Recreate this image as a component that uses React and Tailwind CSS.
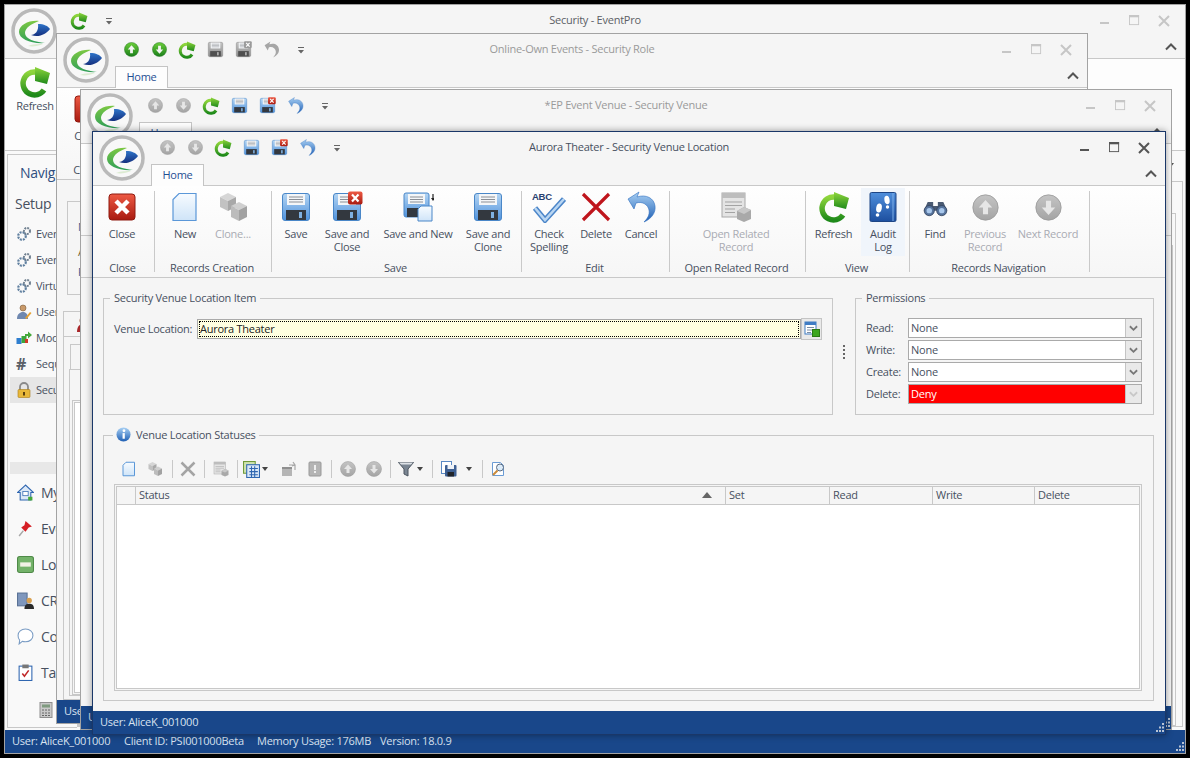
import React from 'react'

const text = 'text-[#47505f]'
const dim = 'text-[#a9abb3]'

function Defs() {
  const stops = (id, a, b) => (
    <linearGradient id={id} x1="0" y1="0" x2="0" y2="1">
      <stop offset="0" stopColor={a} />
      <stop offset="1" stopColor={b} />
    </linearGradient>
  )
  return (
    <svg className="absolute h-0 w-0">
      <defs>
        {stops('gFloppy', '#b4d5f3', '#4f92dc')}
        {stops('gFloppyGray', '#c4c4c4', '#8c8c8c')}
        {stops('gGreen', '#8fd63c', '#1f8a1a')}
        {stops('gRed', '#ee5a44', '#a81a10')}
        {stops('gBallGray', '#c4c4c4', '#a4a4a4')}
        {stops('gBallGreen', '#6ccf3a', '#1b7f1b')}
        {stops('gLogoGreen', '#7cc843', '#2f9f58')}
        {stops('gLogoBlue', '#2f74c8', '#14307f')}
        {stops('gDoc', '#f7fbff', '#cfe4f8')}
        {stops('gUndo', '#a8d0f4', '#1f5fb4')}
        {stops('gBook', '#4f8fdc', '#1d4f9f')}
      </defs>
    </svg>
  )
}

function Logo() {
  return (
    <svg viewBox="0 0 46 46" className="absolute left-[6px] top-[3px] z-10 h-[46px] w-[46px]">
      <circle cx="23" cy="23" r="21" fill="#f8f8f8" stroke="#b9b9b9" strokeWidth="3.5" />
      <path d="M28 13C18 12 8 17 8 24c0 7 12 12 26 11-10-1-20-4-20-10 0-5 6-9 14-12z" fill="url(#gLogoGreen)" />
      <path d="M20 27c4 0 8-4 7-11 6 0 10 2 12 5-4 5-11 9-19 6z" fill="url(#gLogoBlue)" />
      <path d="M17 38c5 1 10 0 15-2-5 0-10 0-15 2z" fill="#dcebd2" />
    </svg>
  )
}

function Refresh({ size = 32 }) {
  return (
    <svg viewBox="0 0 32 32" width={size} height={size}>
      <path d="M25 24A11.500 11.500 0 1 1 17 6" fill="none" stroke="url(#gGreen)" strokeWidth="5.500" />
      <path d="M16 1l15 6-3 11-12-3z" fill="url(#gGreen)" />
    </svg>
  )
}

function Ball({ down, green, size = 15 }) {
  return (
    <svg viewBox="0 0 32 32" width={size} height={size}>
      <circle cx="16" cy="16" r="15" fill={green ? 'url(#gBallGreen)' : 'url(#gBallGray)'} stroke={green ? '#1b6f1b' : '#9a9a9a'} />
      <path d={down ? 'M13 8h6v8h5l-8 9-8-9h5z' : 'M13 24h6v-8h5l-8-9-8 9h5z'} fill={green ? '#f4f4f4' : '#e6e6e6'} />
    </svg>
  )
}

function Floppy({ gray, size = 32, children }) {
  return (
    <svg viewBox="0 0 32 32" width={size} height={size}>
      <rect x="2.500" y="2.500" width="27" height="27" rx="2.500" fill={gray ? 'url(#gFloppyGray)' : 'url(#gFloppy)'} stroke={gray ? '#8a8a8a' : '#4a87c8'} />
      <rect x="7" y="3" width="18" height="11" fill="#f4f6f8" />
      <path d="M9 6h14M9 8.500h14M9 11h14" stroke="#8b8f96" strokeWidth="1" />
      <rect x="6" y="19" width="20" height="10" fill={gray ? '#4f4f4f' : '#33383f'} />
      <rect x="19" y="21" width="3" height="6" fill={gray ? '#b8b8b8' : '#7fb0e0'} />
      {children}
    </svg>
  )
}

function RedBadge({ gray }) {
  return (
    <g>
      <rect x="17" y="0.500" width="14.500" height="13" rx="2" fill={gray ? '#9a9a9a' : 'url(#gRed)'} />
      <path d="M21 3.500l6.500 7M27.500 3.500l-6.500 7" stroke="#fff" strokeWidth="2.200" />
    </g>
  )
}

function CloseIcon() {
  return (
    <svg viewBox="0 0 32 32" width="32" height="32">
      <rect x="3" y="3" width="26" height="26" rx="3" fill="url(#gRed)" stroke="#8f1a10" />
      <path d="M10 10l12 12M22 10L10 22" stroke="#fff" strokeWidth="4.500" />
    </svg>
  )
}

function Doc({ size = 32 }) {
  return (
    <svg viewBox="0 0 32 32" width={size} height={size}>
      <path d="M10 2.500h17v27H4V8.500z" fill="url(#gDoc)" stroke="#5a97d8" strokeWidth={size < 20 ? 2 : 1.2} />
    </svg>
  )
}

function Cubes({ size = 32 }) {
  return (
    <svg viewBox="0 0 32 32" width={size} height={size}>
      <path d="M11 2l8 4-8 4-8-4z" fill="#d6d6d6" />
      <path d="M3 6l8 4v10l-8-4z" fill="#c2c2c2" />
      <path d="M19 6l-8 4v10l8-4z" fill="#a8a8a8" />
      <path d="M22 11l8 4-8 4-8-4z" fill="#cfcfcf" />
      <path d="M14 15l8 4v11l-8-4z" fill="#bcbcbc" />
      <path d="M30 15l-8 4v11l8-4z" fill="#a2a2a2" />
    </svg>
  )
}

function Undo({ gray, size = 16 }) {
  return (
    <svg viewBox="0 0 32 32" width={size} height={size}>
      <path d="M14 1L3 8l6 10 2-6c7-2 12 2 13 7 1 5-2 9-5 12 7-3 12-9 11-16C29 7 21 3 12 6z" fill={gray ? '#a6a6a6' : 'url(#gUndo)'} stroke={gray ? 'none' : '#2f6fc0'} strokeWidth="0.600" />
    </svg>
  )
}

function SaveNew() {
  return (
    <svg viewBox="0 0 32 32" width="32" height="32">
      <rect x="2" y="2" width="25" height="24" rx="2" fill="url(#gFloppy)" stroke="#4a87c8" />
      <rect x="6" y="3" width="17" height="10" fill="#f4f6f8" />
      <path d="M8 6h13M8 8.500h13M8 11h13" stroke="#8b8f96" />
      <rect x="5" y="17" width="14" height="9" fill="#33383f" />
      <path d="M19 15h11v15H16V18z" fill="url(#gDoc)" stroke="#4a87c8" />
      <path d="M31 3v5" stroke="#222" strokeWidth="1.200" />
      <path d="M29 7h4l-2 3z" fill="#222" />
    </svg>
  )
}

function Spell() {
  return (
    <svg viewBox="0 0 34 32" width="34" height="32">
      <text x="0" y="9" fontSize="9.500" fontWeight="700" fill="#27406f" fontFamily="Liberation Sans, sans-serif">ABC</text>
      <path d="M3 17l10 12L32 8" fill="none" stroke="#4c86c9" strokeWidth="5.500" />
      <path d="M3 17l10 12L32 8" fill="none" stroke="#b9d6f2" strokeWidth="2.500" />
    </svg>
  )
}

function DeleteIcon({ size = 32, gray }) {
  return (
    <svg viewBox="0 0 32 32" width={size} height={size}>
      <path d="M3 3l26 26M29 3L3 29" stroke={gray ? '#a4a4a4' : '#bf151c'} strokeWidth={gray ? 5 : 3.2} />
    </svg>
  )
}

function RelatedIcon({ size = 32 }) {
  return (
    <svg viewBox="0 0 32 32" width={size} height={size}>
      <rect x="2" y="2" width="23" height="24" fill="#e4e4e4" stroke="#a8a8a8" />
      <rect x="2" y="2" width="23" height="5" fill="#bdbdbd" />
      <path d="M5 11h17M5 14.500h17M5 18h10M5 21.500h10" stroke="#a3a3a3" />
      <path d="M17 20l7-4 7 3v9l-7 3-7-3z" fill="#a9a9a9" />
      <path d="M17 20l7 3 7-4-7-3z" fill="#c8c8c8" />
    </svg>
  )
}

function AuditIcon() {
  return (
    <svg viewBox="0 0 32 32" width="32" height="32">
      <rect x="3" y="1.500" width="26" height="29" rx="1.500" fill="url(#gBook)" stroke="#1d4585" />
      <path d="M26 2v28" stroke="#7fb0e8" />
      <ellipse cx="12" cy="17" rx="2.800" ry="4.500" fill="#fff" transform="rotate(10 12 17)" />
      <ellipse cx="10.500" cy="24" rx="1.800" ry="1.800" fill="#fff" />
      <ellipse cx="20" cy="9" rx="2.600" ry="4.200" fill="#fff" transform="rotate(-8 20 9)" />
      <ellipse cx="20.500" cy="16" rx="1.700" ry="1.800" fill="#fff" />
    </svg>
  )
}

function Binoculars() {
  return (
    <svg viewBox="0 0 32 32" width="25" height="25">
      <path d="M6 9h7v5h6V9h7l5 11H1z" fill="#4a5a72" />
      <circle cx="8" cy="20" r="6.500" fill="#56739c" stroke="#2f3f58" />
      <circle cx="24" cy="20" r="6.500" fill="#56739c" stroke="#2f3f58" />
      <circle cx="8" cy="20" r="3.500" fill="#a9c8ec" />
      <circle cx="24" cy="20" r="3.500" fill="#a9c8ec" />
    </svg>
  )
}

function Drop() {
  return (
    <svg viewBox="0 0 8 8" width="8" height="8">
      <path d="M1 1h6v1H1z M1 4h6L4 7.500z" fill="#666" />
    </svg>
  )
}

function Tri({ color = '#444' }) {
  return (
    <svg viewBox="0 0 6 4" width="6" height="4">
      <path d="M0 0h6L3 4z" fill={color} />
    </svg>
  )
}

function Controls({ active }) {
  const c = active ? '#555' : '#c6c6c6'
  return (
    <div className="flex justify-end pr-[6px]">
      <div className="flex h-[30px] w-[30px] items-center justify-center">
        <span className="mt-[4px] h-[2px] w-[9px]" style={{ background: c }} />
      </div>
      <div className="flex h-[30px] w-[30px] items-center justify-center">
        <svg viewBox="0 0 12 12" width="11" height="11">
          <rect x="0.500" y="0.500" width="10" height="10" fill="none" stroke={c} />
          <rect x="0" y="0" width="11" height="2.500" fill={c} />
        </svg>
      </div>
      <div className="flex h-[30px] w-[30px] items-center justify-center">
        <svg viewBox="0 0 12 12" width="12" height="12">
          <path d="M1 1l10 10M11 1L1 11" stroke={c} strokeWidth="2" />
        </svg>
      </div>
    </div>
  )
}

function Window({ position, active, title, qat, tab = true, children }) {
  return (
    <div className={`absolute isolate flex flex-col overflow-hidden border bg-[#f5f5f5] ${position} ${active ? 'border-[#1a3768]' : 'border-[#a3a3a3]'}`}>
      <Logo />
      <div className="grid h-[31px] shrink-0 grid-cols-[1fr_auto_1fr] items-center">
        <div className="flex items-center pl-[60px]">
          {qat.map((icon, i) => (
            <span key={i} className="flex h-[30px] w-[28px] items-center justify-center">{icon}</span>
          ))}
          <span className="flex h-[30px] w-[32px] items-center justify-center"><Drop /></span>
        </div>
        <div className={active ? 'text-[#47505f]' : title.startsWith('Security') ? 'text-[#5c5f66]' : 'text-[#9a9a9a]'}>{title}</div>
        <Controls active={active} />
      </div>
      <div className="flex h-[22px] shrink-0 items-end justify-between">
        {tab ? (
          <div className="z-[1] -mb-px ml-[58px] flex h-[22px] w-[53px] items-center justify-center border border-b-0 border-[#c4c4c4] bg-[#fdfdfd] text-[#1f4f93]">Home</div>
        ) : <div />}
        <svg viewBox="0 0 12 8" width="12" height="8" className="mb-[7px] mr-[8px]">
          <path d="M1 6.500l5-5 5 5" fill="none" stroke="#555" strokeWidth="2" />
        </svg>
      </div>
      {children}
    </div>
  )
}

function RibbonBtn({ w, icon, lines, disabled, hot }) {
  return (
    <div className={`flex h-[68px] flex-col items-center pt-[3px] text-center leading-[13px] ${w} ${hot ? 'bg-[#f0f5fb]' : ''} ${disabled ? dim : text}`}>
      <div className="mb-[4px] flex h-[32px] items-center justify-center">{icon}</div>
      {lines.map((l) => <span key={l} className="whitespace-nowrap">{l}</span>)}
    </div>
  )
}

function Group({ w, pad, label, children }) {
  return (
    <>
      <div className={`flex shrink-0 flex-col ${w}`}>
        <div className={`flex h-[72px] pt-[2px] ${pad || 'justify-center'}`}>{children}</div>
        <div className={`mt-[2px] whitespace-nowrap pr-[2px] text-center leading-4 ${text}`}>{label}</div>
      </div>
      <div className="my-[5px] w-px shrink-0 bg-[#c9c9c9]" />
    </>
  )
}

function Ribbon({ children }) {
  return (
    <div className="flex h-[93px] shrink-0 border-y border-[#c8c8c8] bg-linear-to-b from-[#fefefe] to-[#f6f6f6]">
      {children}
    </div>
  )
}

function Combo({ label, value, deny }) {
  return (
    <div className="flex h-[20px] items-center">
      <span className={`w-[42px] ${text}`}>{label}</span>
      <div className={`flex h-[20px] w-[234px] items-center border border-[#aaaaaa] ${deny ? 'bg-[#ff0000] text-white' : 'bg-white text-[#47505f]'}`}>
        <span className="flex-1 pl-[2px]">{value}</span>
        <span className="flex h-full w-[16px] items-center justify-center border-l border-[#c4c4c4] bg-[#e9e9e9]">
          <svg viewBox="0 0 10 7" width="9" height="7">
            <path d="M1 1l4 4 4-4" fill="none" stroke={deny ? '#c8c8c8' : '#777'} strokeWidth="2" />
          </svg>
        </span>
      </div>
    </div>
  )
}

function Grip() {
  return (
    <svg viewBox="0 0 9 9" width="9" height="9" className="mb-[2px] mr-[1px] self-end">
      <path d="M7 0h2v2H7zM4 3.500h2v2H4zM7 3.500h2v2H7zM1 7h2v2H1zM4 7h2v2H4zM7 7h2v2H7z" fill="#b9c4d4" />
    </svg>
  )
}

function Sep({ w = 'w-[8px]' }) {
  return (
    <span className={`flex h-[22px] justify-center ${w}`}>
      <span className="my-[2px] w-px bg-[#c8c8c8]" />
    </span>
  )
}

function Slot({ w = 'w-[26px]', children }) {
  return <span className={`flex h-[22px] items-center justify-center ${w}`}>{children}</span>
}

function Toolbar() {
  return (
    <div className="mt-[16px] flex h-[22px] items-center pl-[2px]">
      <Slot><Doc size={16} /></Slot>
      <Slot><Cubes size={16} /></Slot>
      <Sep />
      <Slot w="w-[24px]"><DeleteIcon size={16} gray /></Slot>
      <Sep />
      <Slot><RelatedIcon size={16} /></Slot>
      <Sep w="w-[6px]" />
      <span className="flex h-[22px] w-[36px] items-center gap-[2px] pl-[3px]">
        <svg viewBox="0 0 16 16" width="17" height="17">
          <rect x="0.500" y="0.500" width="11" height="11" fill="#cfe3b0" stroke="#6f9a3a" />
          <rect x="3.500" y="3.500" width="12" height="12" fill="#dbe8f7" stroke="#2f66b0" />
          <path d="M6 7h8M6 10h8M6 13h8M8 5v10M11 5v10" stroke="#2f66b0" />
        </svg>
        <Tri />
      </span>
      <Slot><svg viewBox="0 0 16 16" width="16" height="16"><rect x="1" y="6" width="10" height="9" fill="#b5b5b5" /><rect x="1" y="6" width="10" height="2" fill="#8f8f8f" /><path d="M8 4h6v5M12 1l2 3-3 1" fill="none" stroke="#a8a8a8" strokeWidth="1.200" /></svg></Slot>
      <Slot><svg viewBox="0 0 16 16" width="16" height="16"><rect x="2" y="1" width="12" height="14" rx="1" fill="#b4b4b4" stroke="#999" /><rect x="7" y="4" width="2" height="5" fill="#eee" /><rect x="7" y="10" width="2" height="2" fill="#eee" /></svg></Slot>
      <Sep w="w-[6px]" />
      <span className="w-[1px]" />
      <Slot><Ball size={16} /></Slot>
      <Slot><Ball down size={16} /></Slot>
      <Sep w="w-[6px]" />
      <span className="flex h-[22px] w-[36px] items-center gap-[3px] pl-[5px]">
        <svg viewBox="0 0 16 16" width="16" height="16">
          <path d="M0.500 1.500h15L10 8v7l-4-2V8z" fill="#7a8592" stroke="#4c5560" />
          <path d="M1 1.500h14l-2 2H3z" fill="#dfe3e8" />
        </svg>
        <Tri />
      </span>
      <Sep w="w-[6px]" />
      <span className="flex h-[22px] w-[44px] items-center gap-[9px] pl-[6px]">
        <svg viewBox="0 0 16 16" width="16" height="16">
          <rect x="0.500" y="0.500" width="10" height="12" fill="#fff" stroke="#5a89c4" />
          <rect x="4" y="4" width="11.500" height="11.500" rx="1" fill="#3d5f92" />
          <rect x="6.500" y="4" width="6.500" height="4" fill="#eef2f7" />
          <rect x="6.500" y="11" width="6.500" height="4.500" fill="#20242a" />
        </svg>
        <Tri />
      </span>
      <Sep w="w-[6px]" />
      <Slot>
        <svg viewBox="0 0 16 16" width="16" height="16">
          <path d="M2.500 1.500h8l3 3v10h-11z" fill="#fff" stroke="#6a9bd4" />
          <circle cx="10" cy="6.500" r="3.500" fill="#dcecfa" stroke="#5a6a80" />
          <path d="M7.500 9.500L3 14" stroke="#c98a3a" strokeWidth="2" />
        </svg>
      </Slot>
    </div>
  )
}

function Statuses() {
  const heads = ['', 'Status', 'Set', 'Read', 'Write', 'Delete']
  return (
    <div className="mt-[4px] h-[207px] w-[1028px] border border-[#c8c8c8] p-px">
      <div className="flex h-full flex-col border border-[#c8c8c8] bg-white">
        <div className="grid h-[18px] shrink-0 grid-cols-[19px_590px_104px_103px_102px_1fr] border-b border-[#c8c8c8] bg-[#f5f5f5]">
          {heads.map((h) => (
            <div key={h} className={`flex items-center justify-between border-r border-[#c8c8c8] pb-px pl-[3px] leading-4 last:border-r-0 ${text}`}>
              {h}
              {h === 'Status' && (
                <svg viewBox="0 0 10 6" width="10" height="6" className="mr-[13px]"><path d="M0 6l5-6 5 6z" fill="#666" /></svg>
              )}
            </div>
          ))}
        </div>
      </div>
    </div>
  )
}

function SecurityVenueLocation() {
  return (
    <Window
      active
      position="left-[92px] top-[131px] h-[604px] w-[1074px] shadow-[0_0_7px_rgba(0,0,0,0.4)]"
      title="Aurora Theater - Security Venue Location"
      qat={[<Ball key="u" />, <Ball key="d" down />, <Refresh key="r" size={18} />, <Floppy key="s" size={17} />, <Floppy key="x" size={17}><RedBadge /></Floppy>, <Undo key="z" size={17} />]}
    >
      <Ribbon>
        <Group w="w-[61px]" pad="pl-[7px]" label="Close">
          <RibbonBtn w="w-[44px]" icon={<CloseIcon />} lines={['Close']} />
        </Group>
        <Group w="w-[116px]" pad="pl-[6px]" label="Records Creation">
          <RibbonBtn w="w-[48px]" icon={<Doc />} lines={['New']} />
          <RibbonBtn w="w-[48px]" disabled icon={<Cubes />} lines={['Clone...']} />
        </Group>
        <Group w="w-[249px]" pad="pl-0" label="Save">
          <RibbonBtn w="w-[48px]" icon={<Floppy />} lines={['Save']} />
          <RibbonBtn w="w-[54px]" icon={<Floppy><RedBadge /></Floppy>} lines={['Save and', 'Close']} />
          <RibbonBtn w="w-[88px]" icon={<SaveNew />} lines={['Save and New']} />
          <RibbonBtn w="w-[52px]" icon={<Floppy />} lines={['Save and', 'Clone']} />
        </Group>
        <Group w="w-[147px]" pad="pl-0" label="Edit">
          <RibbonBtn w="w-[54px]" icon={<Spell />} lines={['Check', 'Spelling']} />
          <RibbonBtn w="w-[40px]" icon={<DeleteIcon />} lines={['Delete']} />
          <RibbonBtn w="w-[50px]" icon={<Undo size={32} />} lines={['Cancel']} />
        </Group>
        <Group w="w-[135px]" pad="pl-[16px]" label="Open Related Record">
          <RibbonBtn w="w-[100px]" disabled icon={<RelatedIcon />} lines={['Open Related', 'Record']} />
        </Group>
        <Group w="w-[103px]" pad="pl-0" label="View">
          <RibbonBtn w="w-[55px]" icon={<Refresh />} lines={['Refresh']} />
          <RibbonBtn w="w-[44px]" hot icon={<AuditIcon />} lines={['Audit', 'Log']} />
        </Group>
        <Group w="w-[179px]" pad="pl-0" label="Records Navigation">
          <RibbonBtn w="w-[50px]" icon={<Binoculars />} lines={['Find']} />
          <RibbonBtn w="w-[50px]" disabled icon={<Ball size={27} />} lines={['Previous', 'Record']} />
          <RibbonBtn w="w-[76px]" disabled icon={<Ball down size={27} />} lines={['Next Record']} />
        </Group>
      </Ribbon>

      <div className="flex flex-1 flex-col px-[10px] pt-[12px]">
        <div className="flex h-[125px]">
          <fieldset className="h-[125px] w-[730px] border border-[#c8c8c8]">
            <legend className={`ml-[6px] px-[4px] leading-4 ${text}`}>Security Venue Location Item</legend>
            <div className="mt-[12px] flex items-center pl-[10px]">
              <span className={`w-[83px] ${text}`}>Venue Location:</span>
              <div className="flex h-[20px] w-[604px] items-center border border-[#aaaaaa] bg-[#ffffe0] p-px">
                <span className="flex h-full w-full items-center border border-dotted border-black text-[#222]">Aurora Theater</span>
              </div>
              <span className="flex h-[22px] w-[21px] items-center justify-center border border-[#c4c4c4] bg-[#e9e9e9]">
                <svg viewBox="0 0 16 16" width="16" height="16">
                  <rect x="1" y="1" width="11" height="12" fill="#fff" stroke="#3f7cc4" />
                  <rect x="1" y="1" width="11" height="3" fill="#3f7cc4" />
                  <path d="M3 6.500h7M3 9h7M3 11.500h4" stroke="#7a8ca4" />
                  <rect x="8.500" y="8.500" width="7" height="7" fill="#3da61f" stroke="#2b7a14" />
                </svg>
              </span>
            </div>
          </fieldset>
          <div className="flex w-[22px] flex-col items-center justify-center gap-[2px] pb-[2px]">
            {[0, 1, 2, 3].map((d) => <span key={d} className="h-[2px] w-[2px] bg-[#666]" />)}
          </div>
          <fieldset className="h-[125px] w-[299px] border border-[#c8c8c8]">
            <legend className={`ml-[6px] px-[4px] leading-4 ${text}`}>Permissions</legend>
            <div className="mt-[12px] flex flex-col gap-[2px] pl-[10px]">
              <Combo label="Read:" value="None" />
              <Combo label="Write:" value="None" />
              <Combo label="Create:" value="None" />
              <Combo label="Delete:" value="Deny" deny />
            </div>
          </fieldset>
        </div>

        <fieldset className="mt-[13px] h-[273px] w-[1051px] border border-[#c8c8c8] pl-[10px]">
          <legend className={`-ml-[1px] px-[3px] leading-[14px] ${text}`}>
            <span className="flex items-center gap-[5px]">
              <svg viewBox="0 0 16 16" width="15" height="15" className="-mt-[1px]">
                <circle cx="8" cy="8" r="7.500" fill="url(#gUndo)" />
                <rect x="7" y="6.500" width="2.400" height="6" fill="#fff" />
                <circle cx="8.500" cy="4" r="1.500" fill="#fff" />
              </svg>
              <span className="-mt-[1px]">Venue Location Statuses</span>
            </span>
          </legend>
          <Toolbar />
          <Statuses />
        </fieldset>
      </div>

      <div className="flex h-[23px] shrink-0 items-center justify-between bg-[#19478a] pl-[7px] text-[#d8e2f0]">
        User: AliceK_001000
        <Grip />
      </div>
    </Window>
  )
}

function EventVenueWindow() {
  return (
    <Window
      position="left-[80px] top-[89px] h-[641px] w-[1092px]"
      title="*EP Event Venue - Security Venue"
      qat={[<Ball key="u" />, <Ball key="d" down />, <Refresh key="r" size={18} />, <Floppy key="s" size={17} />, <Floppy key="x" size={17}><RedBadge /></Floppy>, <Undo key="z" size={17} />]}
    >
      <Ribbon />
      <div className="h-[42px] w-[40px] border-b border-[#c8c8c8]" />
      <div className="flex-1" />
      <div className="flex h-[23px] shrink-0 items-center justify-between bg-[#19478a] pl-[7px] text-[#d8e2f0]">
        User: AliceK_001000
        <Grip />
      </div>
    </Window>
  )
}

function SecurityRoleWindow() {
  return (
    <Window
      position="left-[56px] top-[33px] h-[691px] w-[1032px]"
      title="Online-Own Events - Security Role"
      qat={[<Ball key="u" green />, <Ball key="d" down green />, <Refresh key="r" size={18} />, <Floppy key="s" gray size={17} />, <Floppy key="x" gray size={17}><RedBadge gray /></Floppy>, <Undo key="z" gray size={17} />]}
    >
      <Ribbon>
        <Group w="w-[61px]" label="Close">
          <RibbonBtn w="w-[44px]" icon={<CloseIcon />} lines={['Close']} />
        </Group>
      </Ribbon>
      <div className="flex flex-1 flex-col">
        <div className="ml-[10px] mt-[21px] flex h-[94px] w-[300px] flex-col border border-[#c8c8c8] pl-[10px] pt-[17px] text-[#3a5a8c]">
          <span className="h-[25px]">Name:</span>
          <span className="h-[20px] text-[#7a6a3a]">Active</span>
          <span>Role:</span>
        </div>
        <div className="ml-[6px] mt-[16px] flex h-[25px] w-[100px] items-center border border-b-0 border-[#c8c8c8] pl-[11px]">
          <svg viewBox="0 0 16 16" width="16" height="16">
            <circle cx="8" cy="4.500" r="3.500" fill="#a8745a" />
            <path d="M2 16c0-6 3-8 6-8s6 2 6 8z" fill="#a9272a" />
          </svg>
        </div>
        <div className="ml-[6px] flex h-[364px] flex-col border border-[#c8c8c8] pl-[6px] pt-[7px]">
          <div className="h-[25px] w-[200px] border border-b-0 border-[#c8c8c8]" />
          <div className="-ml-[1px] mb-[3px] flex-1 border border-[#c8c8c8] pl-[2px] pt-[30px]">
            <div className="h-full border border-[#c8c8c8] p-px">
              <div className="h-full border border-[#c8c8c8] bg-white" />
            </div>
          </div>
        </div>
      </div>
      <div className="flex h-[23px] shrink-0 items-center bg-[#19478a] pl-[7px] text-[#d8e2f0]">
        User: AliceK_001000
      </div>
    </Window>
  )
}

const gear = (
  <svg viewBox="0 0 16 16" width="16" height="16">
    <circle cx="6" cy="10" r="3.800" fill="none" stroke="#5f7f9f" strokeWidth="2.200" strokeDasharray="2 1" />
    <circle cx="11" cy="5" r="3" fill="none" stroke="#6f7f8f" strokeWidth="2" strokeDasharray="1.800 1" />
  </svg>
)

const setupItems = [
  { label: 'Event Types', icon: gear },
  { label: 'Event Sections', icon: gear },
  { label: 'Virtual Events', icon: gear },
  {
    label: 'Users',
    icon: (
      <svg viewBox="0 0 16 16" width="16" height="16">
        <circle cx="7" cy="4" r="3" fill="#c99a6a" stroke="#7a5a3a" strokeWidth="0.600" />
        <path d="M1 15c0-5 3-7 6-7s5 2 5 7z" fill="#6f88b0" />
        <path d="M9 14l5-6 1.500 1-5 6z" fill="#e6a030" />
      </svg>
    ),
  },
  {
    label: 'Modules',
    icon: (
      <svg viewBox="0 0 16 16" width="16" height="16">
        <rect x="0.500" y="8" width="5" height="6" fill="#2f7fd0" />
        <rect x="5.500" y="6" width="5" height="7" fill="#3da63a" />
        <rect x="9" y="9" width="3" height="4" fill="#d03a2a" />
        <path d="M9 4h3V1.500L16 5l-4 3.500V6H9z" fill="#45a83a" />
      </svg>
    ),
  },
  { label: 'Sequences', icon: <span className="text-[16px] font-bold leading-none text-[#5a6068]">#</span> },
  {
    label: 'Security',
    active: true,
    icon: (
      <svg viewBox="0 0 16 16" width="16" height="16">
        <path d="M4 8V5a4 4 0 0 1 8 0v3" fill="none" stroke="#8a8a8a" strokeWidth="1.800" />
        <rect x="2" y="7.500" width="12" height="8" rx="1" fill="#e8b83a" stroke="#a87a1a" strokeWidth="0.600" />
        <rect x="7" y="10" width="2" height="3.500" fill="#5a4010" />
      </svg>
    ),
  },
]

const mainItems = [
  {
    label: 'My EventPro',
    icon: (
      <svg viewBox="0 0 16 16" width="17" height="17">
        <path d="M8 1L0.500 8H3v7h10V8h2.500z" fill="#dbe8f7" stroke="#2f66b0" />
        <rect x="5.500" y="7" width="5" height="4" fill="#fff" stroke="#2f66b0" strokeWidth="0.700" />
        <rect x="10.500" y="12" width="4" height="3.500" fill="#45a83a" />
      </svg>
    ),
  },
  {
    label: 'Events',
    icon: (
      <svg viewBox="0 0 16 16" width="17" height="17">
        <path d="M8 1l6 5-3 1-3 4-4-4 3-2z" fill="#d51f25" />
        <path d="M6 10l-4 5" stroke="#a8a8a8" strokeWidth="1.400" />
      </svg>
    ),
  },
  {
    label: 'Lodging',
    icon: (
      <svg viewBox="0 0 16 16" width="17" height="17">
        <rect x="0.500" y="0.500" width="15" height="15" rx="2" fill="#74b36a" stroke="#4f8a48" />
        <rect x="3" y="6" width="10" height="4" fill="#f2f2e6" />
      </svg>
    ),
  },
  {
    label: 'CRM',
    icon: (
      <svg viewBox="0 0 16 16" width="17" height="17">
        <rect x="0.500" y="1" width="9" height="12" fill="#7f97bd" stroke="#5a7296" />
        <circle cx="11.500" cy="8" r="2.500" fill="#d8a050" />
        <path d="M7 16c0-4 2-5 4.500-5s4.500 1 4.500 5z" fill="#2a2a2a" />
      </svg>
    ),
  },
  {
    label: 'Communication',
    icon: (
      <svg viewBox="0 0 16 16" width="17" height="17">
        <path d="M8 1c4 0 7 2.500 7 6s-3 6-7 6c-1 0-2 0-3-.5L2 15l.5-3.500C1.500 10.500 1 9 1 7c0-3.500 3-6 7-6z" fill="#fff" stroke="#7a9cc4" />
      </svg>
    ),
  },
  {
    label: 'Tasks',
    icon: (
      <svg viewBox="0 0 16 16" width="17" height="17">
        <rect x="2" y="2" width="12" height="13.500" fill="#fff" stroke="#2f66b0" />
        <rect x="5" y="0.500" width="6" height="3.500" fill="#777" />
        <path d="M5 9l2 2.500L11 6" fill="none" stroke="#c0282a" strokeWidth="1.500" />
      </svg>
    ),
  },
]

function NavPanel() {
  return (
    <div className="ml-[2px] mt-[3px] flex h-[574px] w-[70px] shrink-0 flex-col overflow-hidden border-y border-l border-[#c8c8c8] pl-[2px]">
      <div className="flex h-[34px] shrink-0 items-center whitespace-nowrap pl-[10px] text-[14px] text-[#2f4f7f]">Navigation</div>
      <div className={`flex h-[28px] shrink-0 items-center pl-[5px] text-[14px] ${text}`}>Setup</div>
      <div className="mt-[4px] flex flex-col">
        {setupItems.map((item) => (
          <div key={item.label} className={`flex h-[26px] items-center whitespace-nowrap pl-[6px] ${item.active ? 'bg-[#e6e6e6]' : ''} ${text}`}>
            <span className="flex w-[20px] shrink-0 justify-start">{item.icon}</span>
            {item.label}
          </div>
        ))}
      </div>
      <div className="mt-[59px] h-[12px] shrink-0 bg-[#e8e8e8]" />
      {mainItems.map((item) => (
        <div key={item.label} className={`flex h-[36px] shrink-0 items-center whitespace-nowrap pl-[7px] text-[14px] ${text}`}>
          <span className="flex w-[24px] shrink-0">{item.icon}</span>
          {item.label}
        </div>
      ))}
      <div className="flex h-[36px] shrink-0 items-center pl-[28px] pt-[3px]">
        <svg viewBox="0 0 16 16" width="16" height="16">
          <rect x="2" y="0.500" width="12" height="15" fill="#c9c9c9" stroke="#8f8f8f" />
          <rect x="4" y="2.500" width="8" height="3" fill="#7f9a7f" />
          <path d="M4 8h2M7 8h2M10 8h2M4 11h2M7 11h2M10 11h2M4 13.500h2M7 13.500h2M10 13.500h2" stroke="#666" />
        </svg>
      </div>
    </div>
  )
}

function EventProWindow() {
  return (
    <Window
      position="left-[4px] top-[4px] h-[750px] w-[1182px]"
      title="Security - EventPro"
      tab={false}
      qat={[<Refresh key="r" size={18} />]}
    >
      <div className="flex h-[93px] shrink-0 items-start border-y border-[#c8c8c8] bg-[#fdfdfd]">
        <div className={`flex w-[60px] flex-col items-center pt-[7px] ${text}`}>
          <Refresh />
          <span>Refresh</span>
        </div>
      </div>
      <div className="flex flex-1 bg-[#f9f9f9]">
        <NavPanel />
        <div className="flex flex-1 flex-col pr-[2px]">
          <div className="flex h-[30px] shrink-0 items-center justify-end pb-[2px] pr-[9px]">
            <Tri color="#555" />
          </div>
          <div className="mb-[3px] flex-1 border border-[#c8c8c8] pr-[6px] pt-[31px]">
            <div className="h-full border border-[#c8c8c8] pr-[2px] pt-[31px]">
              <div className="h-full border border-[#c8c8c8] p-px">
                <div className="h-full border border-[#c8c8c8]" />
              </div>
            </div>
          </div>
        </div>
      </div>
      <div className="flex h-[23px] shrink-0 items-center bg-[#19478a] pl-[7px] text-[#d8e2f0]">
        <span className="w-[112px]">User: AliceK_001000</span>
        <span className="w-[133px]">Client ID: PSI001000Beta</span>
        <span className="w-[123px]">Memory Usage: 176MB</span>
        <span className="flex-1">Version: 18.0.9</span>
        <Grip />
      </div>
    </Window>
  )
}

export default function App() {
  return (
    <div className="relative h-[758px] w-[1190px] overflow-hidden bg-black font-['Open_Sans',sans-serif] text-[11px] tracking-[-0.25px]">
      <Defs />
      <EventProWindow />
      <SecurityRoleWindow />
      <EventVenueWindow />
      <SecurityVenueLocation />
    </div>
  )
}
